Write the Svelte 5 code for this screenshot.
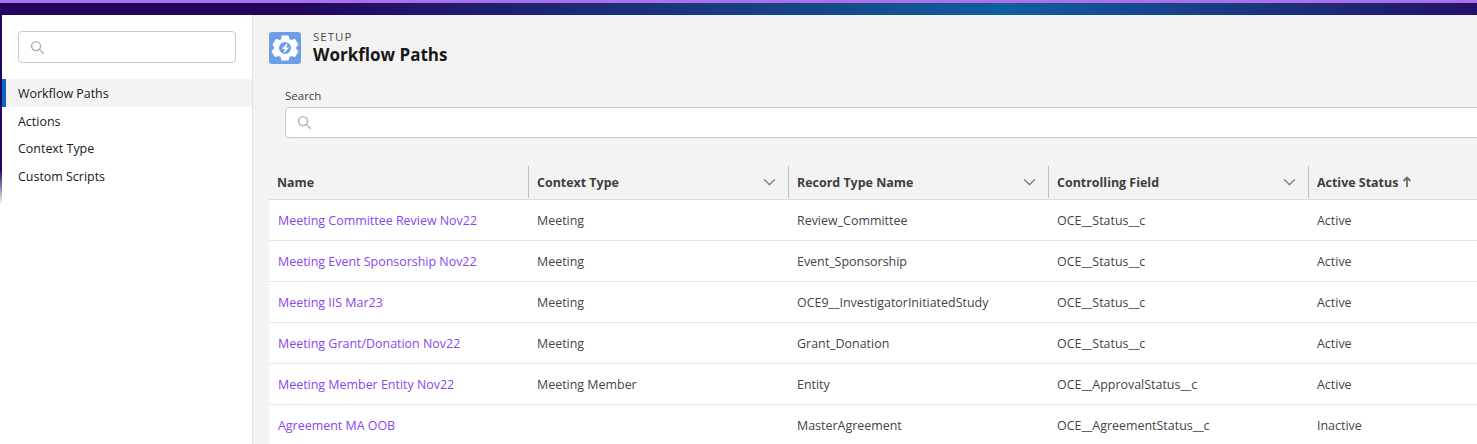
<script>
	const columns = [
		{ label: 'Name', menu: false },
		{ label: 'Context Type', menu: true },
		{ label: 'Record Type Name', menu: true },
		{ label: 'Controlling Field', menu: true },
		{ label: 'Active Status', sorted: true }
	];

	const rows = [
		['Meeting Committee Review Nov22', 'Meeting', 'Review_Committee', 'OCE__Status__c', 'Active'],
		['Meeting Event Sponsorship Nov22', 'Meeting', 'Event_Sponsorship', 'OCE__Status__c', 'Active'],
		['Meeting IIS Mar23', 'Meeting', 'OCE9__InvestigatorInitiatedStudy', 'OCE__Status__c', 'Active'],
		['Meeting Grant/Donation Nov22', 'Meeting', 'Grant_Donation', 'OCE__Status__c', 'Active'],
		['Meeting Member Entity Nov22', 'Meeting Member', 'Entity', 'OCE__ApprovalStatus__c', 'Active'],
		['Agreement MA OOB', '', 'MasterAgreement', 'OCE__AgreementStatus__c', 'Inactive']
	];

	const navItems = ['Workflow Paths', 'Actions', 'Context Type', 'Custom Scripts'];
</script>

{#snippet searchIcon()}
	<svg class="search-icon" viewBox="0 0 16 16" aria-hidden="true">
		<circle cx="6.5" cy="6.5" r="4.8" />
		<path d="M10 10l4.6 4.6" />
	</svg>
{/snippet}

<div class="page">
	<div class="brand-bar"></div>
	<div class="shell">
		<nav class="sidebar">
			<div class="side-search">
				<div class="input">{@render searchIcon()}</div>
			</div>
			<ul class="nav">
				{#each navItems as item, i}
					<li class:active={i === 0}>{item}</li>
				{/each}
			</ul>
		</nav>

		<main class="content">
			<header class="page-header">
				<svg class="setup-icon" viewBox="0 0 32 32" aria-hidden="true">
					<rect width="32" height="32" rx="3" fill="#6d9fe8" />
					<path
						fill="#fff"
						fill-rule="evenodd"
						stroke="#fff"
						stroke-width="1.2"
						stroke-linejoin="round"
						d="M13 4h6l.9 3.4 2.4 1.3 3.6-1 3 5-2.6 2.6v1.4l2.6 2.6-3 5-3.6-1-2.4 1.3L19 28h-6l-.9-3.4-2.4-1.3-3.6 1-3-5 2.6-2.6v-1.4L4.100 12.700l3-5 3.600 1 2.400-1.300zM16 9.400a6.600 6.600 0 1 0 0 13.200 6.600 6.600 0 0 0 0-13.200z"
					/>
					<path fill="#fff" d="M18.600 10.800l-5.800 6h3l-1.400 4.600 5.800-6h-3z" />
				</svg>
				<div class="titles">
					<div class="eyebrow">SETUP</div>
					<h1>Workflow Paths</h1>
				</div>
			</header>

			<div class="filter">
				<label for="wf-search">Search</label>
				<div class="input input--wide">{@render searchIcon()}</div>
			</div>

			<div class="table">
				<div class="row head">
					{#each columns as col}
						<div class="th">
							<span>{col.label}</span>
							{#if col.sorted}
								<svg class="sort" viewBox="0 0 10 12" aria-hidden="true"><path d="M5 11V2M1.6 5L5 1.6 8.4 5" /></svg>
							{/if}
							{#if col.menu}
								<svg class="chevron" viewBox="0 0 14 8" aria-hidden="true"><path d="M1.2 1.2L7 6.8l5.800-5.600" /></svg>
							{/if}
						</div>
					{/each}
				</div>
				{#each rows as row}
					<div class="row">
						{#each row as cell, i}
							<div class="td" class:link={i === 0}>{cell}</div>
						{/each}
					</div>
				{/each}
			</div>
		</main>
	</div>
</div>

<style>
	:global(body) {
		margin: 0;
		background: #fff;
		overflow: hidden;
	}

	.page {
		width: 1477px;
		height: 444px;
		overflow: hidden;
		display: flex;
		flex-direction: column;
		font-family: 'Open Sans', 'Liberation Sans', sans-serif;
		font-size: 12.45px;
		color: #181818;
		background: linear-gradient(to bottom, #24065f 0, #24065f 170px, #fff 205px);
	}

	.brand-bar {
		height: 12px;
		flex: none;
		border-top: 3px solid #a971ea;
		background: linear-gradient(90deg, #24065f 0%, #24065f 20%, #0f5f9a 68%, #24106a 100%);
	}

	.shell {
		flex: 1;
		min-height: 0;
		display: flex;
		margin-left: 2px;
	}

	.sidebar {
		width: 250px;
		flex: none;
		background: #fff;
		border-right: 1px solid #dfe2e6;
	}

	.side-search {
		padding: 16px;
	}

	.input {
		height: 30px;
		border: 1px solid #c9c9c9;
		border-radius: 4px;
		background: #fff;
		display: flex;
		align-items: center;
		padding-left: 11px;
	}

	.input--wide {
		height: 29px;
	}

	.search-icon {
		width: 15px;
		height: 15px;
		fill: none;
		stroke: #aeaeae;
		stroke-width: 1.5;
	}

	.nav {
		list-style: none;
		margin: 0;
		padding: 0;
	}

	.nav li {
		height: 27.3px;
		line-height: 29px;
		padding-left: 16px;
		color: #181818;
	}

	.nav li.active {
		height: 28px;
		background: #f3f3f3;
		box-shadow: inset 4px 0 0 #0b66c8;
	}

	.content {
		flex: 1;
		min-width: 0;
		background: #f3f3f3;
		padding: 17px 0 0 16px;
		overflow: hidden;
	}

	.page-header {
		display: flex;
		align-items: center;
		gap: 12px;
		height: 32px;
	}

	.setup-icon {
		width: 32px;
		height: 32px;
		flex: none;
	}

	.eyebrow {
		font-size: 11.5px;
		line-height: 14px;
		letter-spacing: 1px;
		color: #4a4a48;
	}

	h1 {
		margin: 0;
		font-size: 17px;
		line-height: 22px;
		font-weight: 700;
		color: #181818;
	}

	.filter {
		padding: 0 0 0 16px;
		margin-top: 24px;
		width: 1300px;
	}

	label {
		display: block;
		font-size: 11.5px;
		line-height: 16px;
		color: #3e3e3c;
		margin-bottom: 3px;
	}

	.table {
		margin-top: 27px;
		width: 1300px;
	}

	.row {
		display: grid;
		grid-template-columns: repeat(5, 260px);
		height: 41px;
		background: #fff;
		border-bottom: 1px solid #e5e5e5;
		box-sizing: border-box;
	}

	.row.head {
		height: 35px;
		background: #f3f3f3;
		border-bottom: 1px solid #dcdcdc;
	}

	.th {
		display: flex;
		align-items: center;
		gap: 4px;
		padding: 0 12px 0 8px;
		font-weight: 700;
		color: #3e3e3c;
		border-right: 1px solid #c0c0c0;
		margin: 1px 0;
	}

	.th:last-child {
		border-right: 0;
	}

	.chevron {
		width: 13px;
		height: 8px;
		margin-left: auto;
		fill: none;
		stroke: #706e6b;
		stroke-width: 1.4;
	}

	.sort {
		width: 10px;
		height: 12px;
		fill: none;
		stroke: #706e6b;
		stroke-width: 1.8;
	}

	.td {
		display: flex;
		align-items: center;
		padding-left: 8px;
		color: #444;
	}

	.td.link {
		padding-left: 9px;
		color: #8a45f0;
	}
</style>
